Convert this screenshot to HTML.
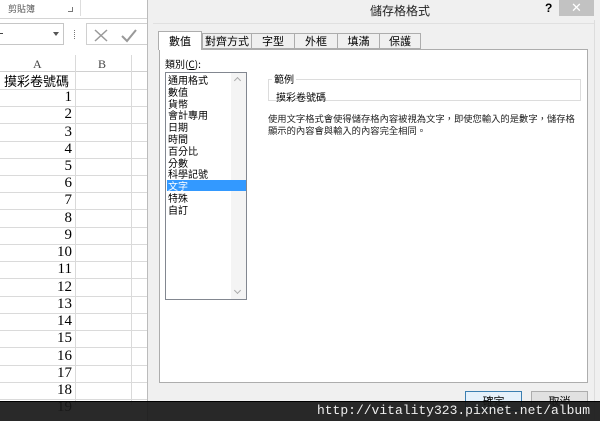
<!DOCTYPE html>
<html><head><meta charset="utf-8"><style>
*{margin:0;padding:0;box-sizing:border-box}
body{width:600px;height:421px;overflow:hidden;position:relative;background:#fff;font-family:"Liberation Sans","Noto Sans CJK TC",sans-serif;font-size:11px;color:#000}
.a{position:absolute}
.cj{font-family:"Noto Sans CJK TC","WenQuanYi Zen Hei",sans-serif}
.hl{position:absolute;left:0;width:147px;height:1px;background:#dadada}
.num{position:absolute;left:0;width:72px;text-align:right;font-family:"Liberation Serif",serif;font-size:15px;line-height:17px}
</style></head><body>
<!-- excel -->
<div class="a" style="left:0;top:0;width:148px;height:19px;background:#fff;border-bottom:1px solid #d4d4d4"></div>
<div class="a cj" style="left:8px;top:2px;font-size:9px;color:#555">剪貼簿</div>
<div class="a" style="left:68px;top:7px;width:5px;height:5px;border-right:1px solid #777;border-bottom:1px solid #777"></div>
<div class="a" style="left:80px;top:0;width:1px;height:16px;background:#ddd"></div>
<div class="a" style="left:0;top:20px;width:148px;height:32px;background:#fff"></div>
<div class="a" style="left:0;top:23px;width:64px;height:22px;border:1px solid #c6c6c6;border-left:none"></div>
<div class="a" style="left:0;top:33px;width:3px;height:1px;background:#444"></div>
<div class="a" style="left:53px;top:32px;border:3px solid transparent;border-top:4px solid #555"></div>
<div class="a" style="left:74px;top:30px;width:1px;height:9px;border-left:1px dotted #777"></div>
<div class="a" style="left:86px;top:23px;width:62px;height:22px;border:1px solid #d0d0d0;border-right:none"></div>
<svg class="a" style="left:92px;top:27px" width="50" height="16"><path d="M3 3L15 14M15 3L3 14" stroke="#999" stroke-width="1.5"/><path d="M30 9L35 14L44 3" stroke="#999" stroke-width="2" fill="none"/></svg>
<div class="a" style="left:0;top:55px;width:147px;height:17px;background:#fff;border-bottom:1px solid #d0d0d0"></div>
<div class="a" style="left:33px;top:57px;font-size:12px;color:#444;font-family:'Liberation Serif',serif">A</div>
<div class="a" style="left:98px;top:57px;font-size:12px;color:#444;font-family:'Liberation Serif',serif">B</div>
<div class="a" style="left:75px;top:55px;width:1px;height:350px;background:#dadada"></div>
<div class="a" style="left:131px;top:55px;width:1px;height:350px;background:#dadada"></div>
<div class="a cj" style="left:4px;top:72px;font-size:13px;line-height:17px">摸彩卷號碼</div>
<div class="hl" style="top:89px"></div>
<div class="hl" style="top:106px"></div><div class="hl" style="top:123px"></div><div class="hl" style="top:141px"></div><div class="hl" style="top:158px"></div><div class="hl" style="top:175px"></div><div class="hl" style="top:192px"></div><div class="hl" style="top:209px"></div><div class="hl" style="top:227px"></div><div class="hl" style="top:244px"></div><div class="hl" style="top:261px"></div><div class="hl" style="top:278px"></div><div class="hl" style="top:296px"></div><div class="hl" style="top:313px"></div><div class="hl" style="top:330px"></div><div class="hl" style="top:347px"></div><div class="hl" style="top:365px"></div><div class="hl" style="top:382px"></div><div class="hl" style="top:399px"></div>
<div class="num" style="top:89px">1</div><div class="num" style="top:106px">2</div><div class="num" style="top:124px">3</div><div class="num" style="top:141px">4</div><div class="num" style="top:158px">5</div><div class="num" style="top:175px">6</div><div class="num" style="top:192px">7</div><div class="num" style="top:210px">8</div><div class="num" style="top:227px">9</div><div class="num" style="top:244px">10</div><div class="num" style="top:261px">11</div><div class="num" style="top:279px">12</div><div class="num" style="top:296px">13</div><div class="num" style="top:313px">14</div><div class="num" style="top:330px">15</div><div class="num" style="top:348px">16</div><div class="num" style="top:365px">17</div><div class="num" style="top:382px">18</div><div class="num" style="top:399px">19</div>
<div class="a" style="left:147px;top:0;width:1px;height:421px;background:#bbb"></div>
<!-- dialog -->
<div class="a" style="left:148px;top:0;width:452px;height:421px;background:#f0f0f0"></div>
<div class="a cj" style="left:370px;top:2px;font-size:12px;color:#222">儲存格格式</div>
<div class="a" style="left:545px;top:1px;font-size:12px;font-weight:bold">?</div>
<div class="a" style="left:559px;top:0;width:35px;height:16px;background:#c2c2c2;color:#fff;text-align:center;font-size:13px;line-height:16px">✕</div>
<div class="a" style="left:153px;top:23px;width:441px;height:1px;background:#e0e0e0"></div>
<div class="a" style="left:159px;top:49px;width:429px;height:334px;background:#fff;border:1px solid #adadad"></div>
<div class="a cj" style="left:158px;top:31px;width:44px;height:19px;background:#fff;border:1px solid #adadad;border-bottom:none;text-align:center;line-height:18px">數值</div>
<div class="a cj" style="left:202px;top:33px;width:50px;height:16px;border:1px solid #adadad;background:#f0f0f0;text-align:center;line-height:15px">對齊方式</div>
<div class="a cj" style="left:252px;top:33px;width:43px;height:16px;border:1px solid #adadad;border-left:none;background:#f0f0f0;text-align:center;line-height:15px">字型</div>
<div class="a cj" style="left:295px;top:33px;width:43px;height:16px;border:1px solid #adadad;border-left:none;background:#f0f0f0;text-align:center;line-height:15px">外框</div>
<div class="a cj" style="left:338px;top:33px;width:42px;height:16px;border:1px solid #adadad;border-left:none;background:#f0f0f0;text-align:center;line-height:15px">填滿</div>
<div class="a cj" style="left:380px;top:33px;width:41px;height:16px;border:1px solid #adadad;border-left:none;background:#f0f0f0;text-align:center;line-height:15px">保護</div>
<div class="a cj" style="left:165px;top:56px;font-size:10px">類別(<u>C</u>):</div>
<div class="a" style="left:165px;top:72px;width:82px;height:228px;border:1px solid #828790;background:#fff"></div>
<div class="a" style="left:246px;top:73px;width:0;height:0"></div>
<div class="a" style="left:231px;top:73px;width:15px;height:226px;background:#f4f4f4"></div>
<div class="a" style="left:235px;top:78px;width:5px;height:5px;border-left:1px solid #aaa;border-top:1px solid #aaa;transform:rotate(45deg)"></div>
<div class="a" style="left:235px;top:288px;width:5px;height:5px;border-right:1px solid #aaa;border-bottom:1px solid #aaa;transform:rotate(45deg)"></div>
<div class="a" style="left:167px;top:180px;width:79px;height:11px;background:#3399ff"></div>
<div class="a cj" style="left:168px;top:74px;font-size:10px;line-height:11.8px">通用格式<br>數值<br>貨幣<br>會計專用<br>日期<br>時間<br>百分比<br>分數<br>科學記號<br><span style="color:#fff">文字</span><br>特殊<br>自訂</div>
<div class="a" style="left:268px;top:79px;width:313px;height:22px;border:1px solid #dcdcdc"></div>
<div class="a cj" style="left:272px;top:73px;background:#fff;padding:0 2px;font-size:10px;line-height:11px">範例</div>
<div class="a cj" style="left:276px;top:89px;font-size:10px">摸彩卷號碼</div>
<div class="a cj" style="left:268px;top:112px;font-size:9.3px;line-height:12px;color:#222;white-space:nowrap">使用文字格式會使得儲存格內容被視為文字，即使您輸入的是數字，儲存格<br>顯示的內容會與輸入的內容完全相同。</div>
<div class="a cj" style="left:465px;top:391px;width:57px;height:20px;border:1px solid #3c7fb1;background:#e5f1fb;text-align:center;line-height:18px">確定</div>
<div class="a cj" style="left:531px;top:391px;width:57px;height:20px;border:1px solid #adadad;background:#e1e1e1;text-align:center;line-height:18px">取消</div>
<div class="a" style="left:594px;top:20px;width:1px;height:400px;background:#ddd"></div>
<!-- watermark bar -->
<div class="a" style="left:0;top:401px;width:600px;height:20px;background:rgba(25,25,25,.93);border-top:1px solid #000"></div>
<div class="a" style="right:10px;top:403px;font-family:'Liberation Mono',monospace;font-size:13px;color:#eee">http://vitality323.pixnet.net/album</div>
</body></html>
